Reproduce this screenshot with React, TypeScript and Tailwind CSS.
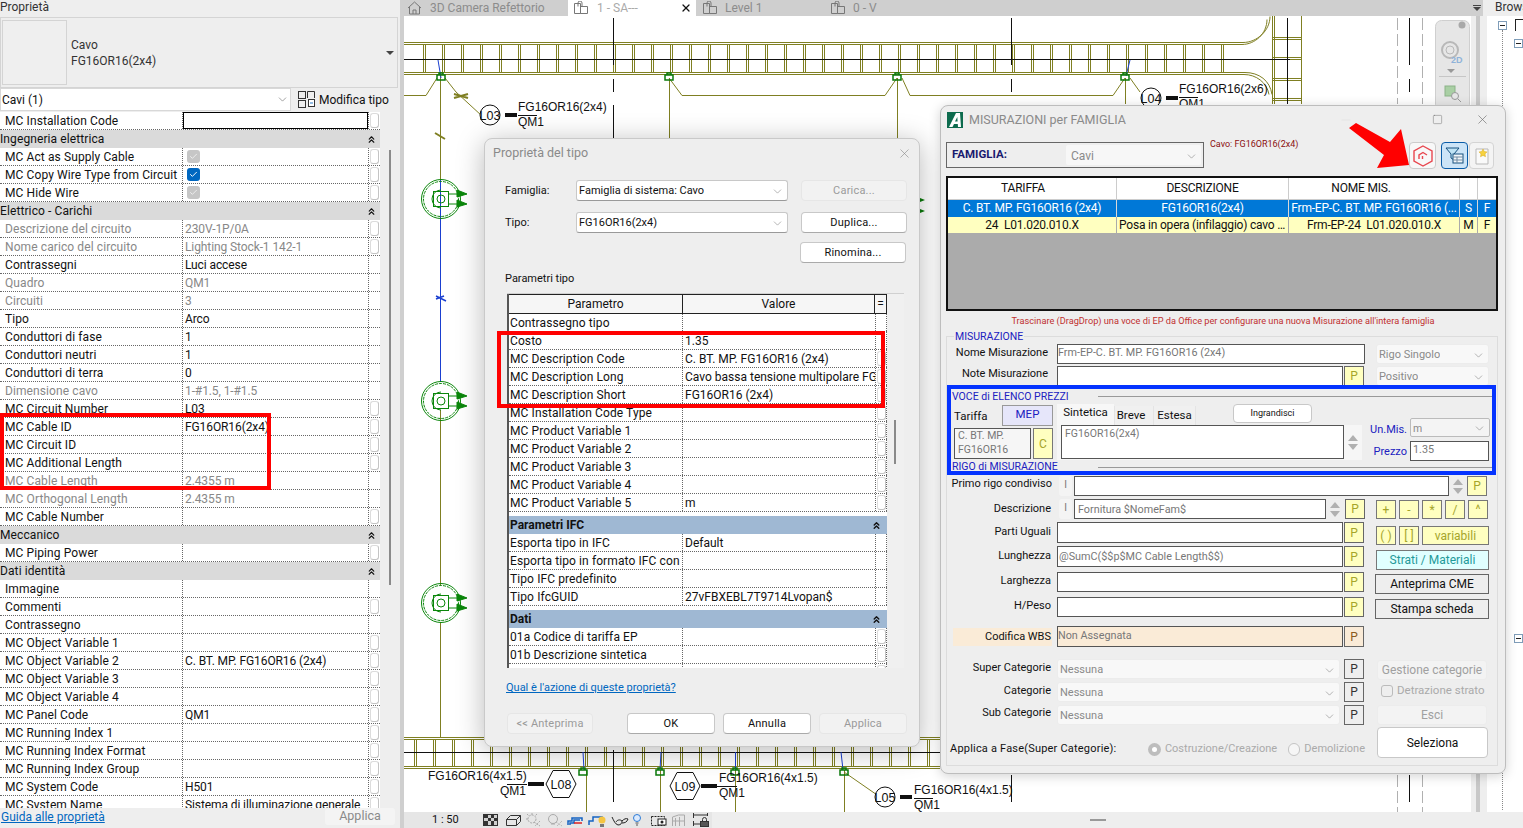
import { ChevronDown, ChevronsUp, X, Minus, Square, Check } from 'lucide-react';
import type { ReactNode } from 'react';

type Prop = { label: string; value?: string; muted?: boolean; pill?: boolean; check?: 'on' | 'off'; section?: boolean; focus?: boolean };

const props: Prop[] = [
  { label: 'MC Installation Code', pill: true, focus: true },
  { label: 'Ingegneria elettrica', section: true },
  { label: 'MC Act as Supply Cable', check: 'off', pill: true },
  { label: 'MC Copy Wire Type from Circuit', check: 'on', pill: true },
  { label: 'MC Hide Wire', check: 'off', pill: true },
  { label: 'Elettrico - Carichi', section: true },
  { label: 'Descrizione del circuito', value: '230V-1P/0A', muted: true, pill: true },
  { label: 'Nome carico del circuito', value: 'Lighting Stock-1 142-1', muted: true, pill: true },
  { label: 'Contrassegni', value: 'Luci accese' },
  { label: 'Quadro', value: 'QM1', muted: true },
  { label: 'Circuiti', value: '3', muted: true },
  { label: 'Tipo', value: 'Arco' },
  { label: 'Conduttori di fase', value: '1' },
  { label: 'Conduttori neutri', value: '1' },
  { label: 'Conduttori di terra', value: '0' },
  { label: 'Dimensione cavo', value: '1-#1.5, 1-#1.5', muted: true },
  { label: 'MC Circuit Number', value: 'L03', pill: true },
  { label: 'MC Cable ID', value: 'FG16OR16(2x4)', pill: true },
  { label: 'MC Circuit ID', pill: true },
  { label: 'MC Additional Length', pill: true },
  { label: 'MC Cable Length', value: '2.4355 m', muted: true },
  { label: 'MC Orthogonal Length', value: '2.4355 m', muted: true },
  { label: 'MC Cable Number', pill: true },
  { label: 'Meccanico', section: true },
  { label: 'MC Piping Power', pill: true },
  { label: 'Dati identità', section: true },
  { label: 'Immagine' },
  { label: 'Commenti', pill: true },
  { label: 'Contrassegno' },
  { label: 'MC Object Variable 1', pill: true },
  { label: 'MC Object Variable 2', value: 'C. BT. MP. FG16OR16 (2x4)', pill: true },
  { label: 'MC Object Variable 3', pill: true },
  { label: 'MC Object Variable 4', pill: true },
  { label: 'MC Panel Code', value: 'QM1', pill: true },
  { label: 'MC Running Index 1', pill: true },
  { label: 'MC Running Index Format', pill: true },
  { label: 'MC Running Index Group', pill: true },
  { label: 'MC System Code', value: 'H501', pill: true },
  { label: 'MC System Name', value: 'Sistema di illuminazione generale', pill: true },
];

const typeParams: Prop[] = [
  { label: 'Contrassegno tipo' },
  { label: 'Costo', value: '1.35' },
  { label: 'MC Description Code', value: 'C. BT. MP. FG16OR16 (2x4)', pill: true },
  { label: 'MC Description Long', value: 'Cavo bassa tensione multipolare FG', pill: true },
  { label: 'MC Description Short', value: 'FG16OR16 (2x4)', pill: true },
  { label: 'MC Installation Code Type', pill: true },
  { label: 'MC Product Variable 1', pill: true },
  { label: 'MC Product Variable 2', pill: true },
  { label: 'MC Product Variable 3', pill: true },
  { label: 'MC Product Variable 4', pill: true },
  { label: 'MC Product Variable 5', value: 'm', pill: true },
  { label: 'Parametri IFC', section: true },
  { label: 'Esporta tipo in IFC', value: 'Default' },
  { label: 'Esporta tipo in formato IFC con' },
  { label: 'Tipo IFC predefinito' },
  { label: 'Tipo IfcGUID', value: '27vFBXEBL7T9714Lvopan$' },
  { label: 'Dati', section: true },
  { label: '01a Codice di tariffa EP', pill: true },
  { label: '01b Descrizione sintetica', pill: true },
  { label: '', pill: true },
];

function Pill() {
  return <div className="mx-auto mt-[1px] h-[15px] w-[9px] rounded-[3px] border border-[#dcdcdc] border-r-[#c4c4c4] border-b-[#c4c4c4] bg-white" />;
}

function PropRow({ row }: { row: Prop }) {
  if (row.section) {
    return (
      <div className="flex h-[18px] items-center justify-between bg-[#dadada] pr-[3px] text-[12px] tracking-[0.1px] text-[#111]">
        <span>{row.label}</span>
        <ChevronsUp size={11} strokeWidth={2.5} />
      </div>
    );
  }
  const text = row.muted ? 'text-[#888]' : 'text-[#111]';
  return (
    <div className={`flex h-[18px] border-b border-dotted border-[#666] bg-white text-[12px] ${text}`}>
      <div className="w-[183px] shrink-0 truncate border-r border-dotted border-[#666] pl-[5px] leading-[18px] tracking-[0.1px]">{row.label}</div>
      <div className="w-[185px] shrink-0 overflow-hidden pl-[2px] leading-[18px] tracking-[-0.1px] whitespace-nowrap">
        {row.focus && <div className="ml-[-2px] h-[17px] w-[185px] border border-black" />}
        {row.check === 'on' && <div className="mt-[2px] ml-[2px] flex h-[13px] w-[13px] items-center justify-center rounded-[3px] bg-[#0067c0]"><Check size={9} strokeWidth={2.5} color="#fff" /></div>}
        {row.check === 'off' && <div className="mt-[2px] ml-[2px] flex h-[13px] w-[13px] items-center justify-center rounded-[3px] bg-[#c6c6c6]"><Check size={9} strokeWidth={2.5} color="#eee" /></div>}
        {row.value}
      </div>
      <div className="w-[12px] shrink-0 border-l border-dotted border-[#666]">{row.pill && <Pill />}</div>
    </div>
  );
}

function TypeRow({ row }: { row: Prop }) {
  if (row.section) {
    return (
      <div className="mt-[4px] flex h-[18px] w-[378px] items-center justify-between bg-[#9fb8d3] pr-[5px] pl-[1px] text-[12px] font-bold text-[#111]">
        <span>{row.label}</span>
        <ChevronsUp size={11} strokeWidth={3} />
      </div>
    );
  }
  return (
    <div className="flex h-[18px] w-[378px] border-b border-dotted border-[#666] bg-white text-[12px] text-[#111]">
      <div className="w-[174px] shrink-0 truncate border-r border-dotted border-[#666] pl-[1px] leading-[18px] tracking-[0.1px]">{row.label}</div>
      <div className="w-[192px] shrink-0 overflow-hidden pl-[2px] leading-[18px] whitespace-nowrap">{row.value}</div>
      <div className="w-[12px] shrink-0 border-x border-dotted border-[#666]">{row.pill && <Pill />}</div>
    </div>
  );
}

function Lock({ x }: { x: number }) {
  return (
    <svg width="16" height="14" viewBox="0 0 16 14" style={{ marginLeft: x }} className="shrink-0 text-[#777]" fill="none" stroke="currentColor">
      <path d="M1.500 2.500h6v10h-6zM7.500 5.500h7v7h-7z" />
      <path d="M5 5.500V2a2 2 0 0 1 4 0v3.500" />
    </svg>
  );
}

function House({ x }: { x: number }) {
  return (
    <svg width="15" height="14" viewBox="0 0 15 14" style={{ marginLeft: x }} className="shrink-0 text-[#777]" fill="none" stroke="currentColor">
      <path d="M1 7l6.500-6L14 7M2.500 6v7h10V6M6 13V9h3v4" />
    </svg>
  );
}

function Rungs({ y1, y2, from, to }: { y1: number; y2: number; from: number; to: number }) {
  const items: ReactNode[] = [];
  for (let x = from; x < to; x += 19) {
    items.push(<path key={x} d={`M${x}.5 ${y1}V${y2}M${x + 2}.5 ${y1}V${y2}`} />);
  }
  return <g stroke="#7f7f22" strokeWidth="1" fill="none">{items}</g>;
}

function Fixture({ y }: { y: number }) {
  return (
    <g stroke="#0a860a" fill="none" strokeWidth="1">
      <circle cx="441" cy={y} r="19.500" />
      <circle cx="441" cy={y} r="17.500" strokeDasharray="3 1" />
      <path d={`M432 ${y}a9 9 0 0 1 9-9M432 ${y}a9 9 0 0 0 9 9`} />
      <rect x="433.500" y={y - 7.5} width="15" height="15" />
      <circle cx="441" cy={y} r="4" />
      <path d={`M449 ${y - 5}h8M449 ${y + 5}h8`} />
      <path d={`M457 ${y - 9}l10 4-10 3zM457 ${y + 1}l10 4-10 3z`} fill="#0a860a" />
    </g>
  );
}

function Node({ x, y }: { x: number; y: number }) {
  return <path d={`M${x - 4} ${y}h8v5h-8zM${x - 2} ${y}v-2h4v2`} stroke="#0a7a0a" strokeWidth="1.500" fill="none" />;
}

function Label({ x, y, top, bottom, under, bx }: { x: number; y: number; top: string; bottom: string; under: [number, number]; bx?: number }) {
  return (
    <g fontFamily="'Liberation Sans', sans-serif" fontSize="12" fill="#111">
      <text x={x} y={y}>{top}</text>
      <line x1={under[0]} x2={under[1]} y1={y + 4.5} y2={y + 4.5} stroke="#111" />
      <text x={bx ?? x} y={y + 15}>{bottom}</text>
    </g>
  );
}

function Tag({ cx, cy, text, hex, left }: { cx: number; cy: number; text: string; hex?: boolean; left?: boolean }) {
  const r = hex ? 15 : 10;
  const thickX = left ? cx - r - 18 : cx + r + (hex ? 1 : 5);
  return (
    <g>
      <rect x={thickX} y={cy - 2} width={hex ? 16 : 12} height="4" fill="#111" />
      {hex ? (
        <path d={`M${cx - 15} ${cy}l7-13.500h16l7 13.500-7 13.500h-16z`} fill="#fff" stroke="#111" />
      ) : (
        <circle cx={cx} cy={cy} r="10" fill="#fff" stroke="#111" />
      )}
      <text x={cx} y={cy + 5} textAnchor="middle" fontFamily="'Liberation Sans', sans-serif" fontSize="12.500" fill="#111">{text}</text>
    </g>
  );
}

function Drawing() {
  return (
    <svg width="1067" height="796" viewBox="404 16 1067 796" className="block shrink-0 bg-white">
      <g stroke="#7f7f22" fill="none">
        <path d="M404 42.500H1243c14 0 27-12 27-26M404 44.500H1242c13 0 25-11 25-25" />
        <path d="M404 72.500H1245c14 0 25 8 27 22M404 74.500H1244c12 0 23 8 25 20" />
        <path d="M1272.500 16V104M1274.500 16V104M1301.500 16V104M1273 37.500h29M1273 39.500h29M1273 57.500h29M1273 59.500h29M1273 78.500h29M1273 80.500h29M1273 98.500h29M1273 100.500h29" />
        <path d="M404 95.500H426L437 78M445 78L456 92L482 116M669 78L682 95.500H885L897 78M902 78L910 95.500H1113L1125 78M1130 78L1140 92" />
        <path d="M440.500 75V180M669.500 78V140M897.500 78V140M1125.500 78V104M440.500 410V585M440.500 622V738" />
        <path d="M454 98l14-4M454 94l14 4M435 133l10 6" strokeWidth="2" />
        <path d="M586.500 770V812M660.500 770V812M735.500 770V812M844.500 770V812M844 772L880 797" />
        <path d="M404 737.500H940M404 739.500H940M404 766.500H940M404 768.500H940" />
      </g>
      <Rungs y1={45} y2={72} from={423} to={1240} />
      <Rungs y1={740} y2={766} from={414} to={940} />
      <path d="M404 59.500H1290M404 752.500H940M613.500 18V65M613.500 79V92M613.500 105V138M613.500 750V802M1011.500 18V65M1011.500 79V92M1011.500 775V802M1287.500 18V104M1409.500 18V65M1409.500 79V92M1409.500 775V802" stroke="#111" fill="none" />
      <g stroke="#b0b0b0" strokeDasharray="12 4" fill="none"><path d="M1397.500 18V104M1422.500 18V104M1397.500 775V812M1422.500 775V812" /></g>
      <path d="M440.500 180V382M438 60L441 78M583 752L584 770M661 752L660 770M735.500 752V770M841 752L843 770M1130 60L1126 76" stroke="#1a3fd0" fill="none" />
      <path d="M436 296l10 5M436 299l8-3" stroke="#1a3fd0" strokeWidth="1.500" fill="none" />
      <path d="M920 198l5 2-5 2zM920 209l5 2-5 2z" fill="#0a7a0a" />
      <Fixture y={199} />
      <Fixture y={401} />
      <Fixture y={603} />
      <Node x={441} y={75} />
      <Node x={669} y={75} />
      <Node x={897} y={75} />
      <Node x={1125} y={75} />
      <Node x={583} y={770} />
      <Node x={660} y={770} />
      <Node x={735} y={770} />
      <Node x={844} y={770} />
      <Label x={518} y={111} top="FG16OR16(2x4)" bottom="QM1" under={[518, 537]} />
      <Tag cx={490} cy={115} text="L03" />
      <Label x={1179} y={93} top="FG16OR16(2x6)" bottom="QM1" under={[1179, 1198]} />
      <Tag cx={1151} cy={98} text="L04" />
      <Label x={428} y={780} top="FG16OR16(4x1.5)" bottom="QM1" bx={500} under={[507, 527]} />
      <Tag cx={561} cy={784} text="L08" hex left />
      <Label x={719} y={782} top="FG16OR16(4x1.5)" bottom="QM1" under={[717, 737]} />
      <Tag cx={685} cy={786} text="L09" hex />
      <Label x={914} y={794} top="FG16OR16(4x1.5)" bottom="QM1" under={[914, 933]} />
      <Tag cx={885} cy={797} text="L05" />
      <g>
        <rect x="1435.500" y="20.500" width="34" height="90" rx="6" fill="#e6e6e6" stroke="#cfcfcf" />
        <circle cx="1462" cy="25" r="3.500" fill="#a9a9a9" />
        <circle cx="1450" cy="50" r="8" fill="none" stroke="#b8b8b8" strokeWidth="2" />
        <circle cx="1450" cy="50" r="4" fill="none" stroke="#b8b8b8" />
        <text x="1451" y="63" fontFamily="'Liberation Sans', sans-serif" fontSize="9" fontWeight="700" fill="#8fb3d9">2D</text>
        <path d="M1447 69h8l-4 4z" fill="#999" />
        <path d="M1439 76.500h27" stroke="#c6c6c6" />
        <rect x="1445" y="86" width="10" height="10" fill="#a9cfa4" stroke="#8bb287" />
        <circle cx="1455" cy="96" r="3.500" fill="#e6e6e6" stroke="#999" />
        <path d="M1458 99l3 3" stroke="#999" />
      </g>
    </svg>
  );
}

function StatusIcons() {
  return (
    <svg width="230" height="16" viewBox="0 0 230 16" className="ml-[32px] shrink-0" fill="none">
      <rect x="3.500" y="2.500" width="14" height="11" fill="#d0d0d0" stroke="#333" />
      <path d="M4 3h4v3H4zM11 3h3v3h-3zM8 6h3v3H8zM14 6h3v3h-3zM4 9h4v4H4zM11 9h3v4h-3z" fill="#333" />
      <path d="M26.500 7.500h10v6h-10zM26.500 7.500l4-4h10l-4 4M36.500 13.500l4-4v-6" stroke="#333" />
      <g stroke="#aaa" strokeDasharray="2 1"><circle cx="52" cy="7" r="4" /><path d="M52 1v2M46 7h2M47 2l2 2M57 2l-2 2" /><path d="M54 10l6 4M60 9l-5 5" /></g>
      <g stroke="#aaa"><circle cx="73" cy="7" r="4.500" /><path d="M71 12h4" /><path d="M76 10l6 4M82 9l-5 5" strokeDasharray="1 1" /></g>
      <path d="M88 13V9h4V6h10v3M90 13V11h4V8h6" stroke="#1463c2" strokeWidth="1.500" />
      <path d="M94 11h8" stroke="#d22" strokeWidth="1.500" />
      <path d="M109 13V9h4V5h9v3" stroke="#1463c2" strokeWidth="1.500" />
      <circle cx="122" cy="8" r="3.500" fill="#f5c542" />
      <rect x="120" y="12" width="4" height="3" fill="#777" />
      <path d="M132 5c2 4 3 7 6 8 3 0 4-2 4-4-2-2-5-1-6 1M142 9c2-2 4-3 6-2-1 3-3 4-6 4" stroke="#222" />
      <circle cx="157" cy="6" r="3.500" stroke="#2e7cd6" fill="#dbeafe" />
      <path d="M155.500 11h3M156 13h2" stroke="#555" />
      <rect x="171.500" y="4.500" width="13" height="9" stroke="#222" strokeDasharray="2 1" />
      <rect x="178" y="7" width="8" height="6" fill="#fff" stroke="#222" />
      <circle cx="182" cy="10" r="1.500" fill="#222" />
      <path d="M192.500 14V5l6-2h6v11M195.500 14V6M199.500 14V5M192 9h13" stroke="#aaa" />
      <path d="M213.500 1v5M227.500 1v3M213.500 3h14M213.500 9v5M214 12h6" stroke="#333" />
      <rect x="220.500" y="9.500" width="8" height="5" fill="#555" stroke="#333" />
      <path d="M222.500 9V7.500a2 2 0 0 1 4 0V9" stroke="#333" />
    </svg>
  );
}

function Win11Button({ className, children }: { className: string; children: ReactNode }) {
  return <div className={`flex items-center justify-center rounded-[4px] border pt-[2px] text-[11px] tracking-[0.2px] ${className}`}>{children}</div>;
}

function Select({ text, className, gray }: { text: string; className: string; gray?: boolean }) {
  return (
    <div className={`flex items-center justify-between pt-[2px] ${className}`}>
      <span className={`truncate pl-[2px] ${gray ? 'text-[#8a8a8a]' : 'text-[#111]'}`}>{text}</span>
      <ChevronDown size={13} strokeWidth={1} className="mr-[3px] shrink-0 text-[#777]" />
    </div>
  );
}

function TypeDialog() {
  return (
    <div className="absolute top-[138px] left-[484px] z-10 flex h-[609px] w-[436px] flex-col rounded-[8px] border border-[#c9c9c9] bg-[#eeeeee] shadow-[0_4px_28px_rgba(0,0,0,0.28)]">
      <div className="flex h-[29px] shrink-0 items-center justify-between pr-[7px] pl-[8px] text-[12.500px] text-[#8a8a8a]">
        <span>Proprietà del tipo</span>
        <X size={15} strokeWidth={1} className="text-[#888]" />
      </div>
      <div className="mt-[12px] flex h-[21px] items-center pl-[20px] text-[11px]">
        <span className="w-[71px] pt-[2px]">Famiglia:</span>
        <Select text="Famiglia di sistema: Cavo" className="h-[21px] w-[212px] rounded-[3px] border border-[#c8c8c8] border-b-[#999] bg-white" />
        <Win11Button className="ml-[13px] h-[21px] w-[106px] border-[#e6e6e6] bg-[#f2f2f2] text-[#9a9a9a]">Carica...</Win11Button>
      </div>
      <div className="mt-[11px] flex h-[21px] items-center pl-[20px] text-[11px]">
        <span className="w-[71px] pt-[2px]">Tipo:</span>
        <Select text="FG16OR16(2x4)" className="h-[21px] w-[212px] rounded-[3px] border border-[#c8c8c8] border-b-[#999] bg-white" />
        <Win11Button className="ml-[13px] h-[21px] w-[106px] border-[#c8c8c8] border-b-[#aaa] bg-white">Duplica...</Win11Button>
      </div>
      <div className="mt-[9px] flex h-[21px] items-center justify-end pr-[13px]">
        <Win11Button className="h-[21px] w-[106px] border-[#c8c8c8] border-b-[#aaa] bg-white">Rinomina...</Win11Button>
      </div>
      <div className="mt-[8px] h-[16px] pl-[20px] text-[11px] leading-[16px]">Parametri tipo</div>
      <div className="mt-[6px] ml-[22px] flex h-[375px] w-[397px] border-t border-[#d0d0d0] bg-[#f0f0f0]">
        <div className="w-[380px] shrink-0 overflow-hidden border-l-2 border-[#555] bg-white">
          <div className="flex h-[20px] w-[378px] border-t border-b border-[#222] bg-[#f6f6f6] text-[12px] leading-[19px] text-[#111]">
            <div className="w-[174px] shrink-0 border-r border-[#222] text-center">Parametro</div>
            <div className="w-[192px] shrink-0 border-r border-[#222] text-center">Valore</div>
            <div className="w-[12px] shrink-0 border-r border-[#222] text-center">=</div>
          </div>
          {typeParams.map((row, i) => <TypeRow key={i} row={row} />)}
        </div>
        <div className="w-[17px]"><div className="mt-[126px] ml-[7px] h-[44px] w-[2px] bg-[#8a8a8a]" /></div>
      </div>
      <div className="mt-[12px] h-[16px] pl-[21px] text-[11px] leading-[16px] text-[#0067c0] underline">Qual è l'azione di queste proprietà?</div>
      <div className="mt-[17px] flex h-[21px] pl-[22px]">
        <Win11Button className="h-[21px] w-[86px] border-[#e6e6e6] bg-[#f2f2f2] text-[#9a9a9a]">&lt;&lt; Anteprima</Win11Button>
        <Win11Button className="ml-[34px] h-[21px] w-[88px] border-[#c8c8c8] border-b-[#aaa] bg-white">OK</Win11Button>
        <Win11Button className="ml-[8px] h-[21px] w-[88px] border-[#c8c8c8] border-b-[#aaa] bg-white">Annulla</Win11Button>
        <Win11Button className="ml-[8px] h-[21px] w-[88px] border-[#e6e6e6] bg-[#f2f2f2] text-[#9a9a9a]">Applica</Win11Button>
      </div>
    </div>
  );
}

function P({ gray, wbs }: { gray?: boolean; wbs?: boolean }) {
  const tone = gray ? 'bg-[#eeeeee] text-[#333]' : wbs ? 'bg-[#faebd7] text-[#8a5a20]' : 'bg-[#ffffc0] text-[#a5a52a]';
  return <div className={`ml-[1px] flex h-full w-[20px] shrink-0 items-center justify-center border border-[#666] text-[12px] ${tone}`}>P</div>;
}

function Field({ className, text, tone = 'bg-white' }: { className: string; text?: string; tone?: string }) {
  return <div className={`h-full shrink-0 truncate border border-[#555] text-[10.800px] leading-[16px] text-[#777] ${tone} ${className}`}>{text}</div>;
}

function Spin() {
  return (
    <div className="flex w-[18px] shrink-0 flex-col items-center justify-center gap-[3px]">
      <div className="h-0 w-0 border-x-[5px] border-b-[6px] border-x-transparent border-b-[#b0b0b0]" />
      <div className="h-0 w-0 border-x-[5px] border-t-[6px] border-x-transparent border-t-[#b0b0b0]" />
    </div>
  );
}

function FormRow({ label, h, mt, children, lift = 'leading-[18px]' }: { label: string; h: string; mt: string; children: ReactNode; lift?: string }) {
  return (
    <div className={`flex ${h} ${mt}`}>
      <span className={`w-[105px] shrink-0 pr-[1px] text-right text-[11px] text-[#111] ${lift}`}>{label}</span>
      <div className="ml-[5px] flex h-full">{children}</div>
    </div>
  );
}

function Op({ className, children }: { className: string; children: ReactNode }) {
  return <div className={`flex h-[19px] items-center justify-center border border-[#777] bg-[#ffffc0] text-[12px] text-[#a5a52a] ${className}`}>{children}</div>;
}

function Gray({ className, children }: { className: string; children: ReactNode }) {
  return <div className={`flex items-center justify-center rounded-[3px] border border-[#ececec] bg-[#f3f3f3] text-[12px] text-[#a0a0a0] ${className}`}>{children}</div>;
}

const selectGray = 'h-full rounded-[3px] border border-[#ececec] bg-[#f8f8f8] text-[11px]';

function BigDialog() {
  return (
    <div className="absolute top-[105px] left-[940px] z-20 flex h-[669px] w-[566px] flex-col rounded-[8px] border border-[#bdbdbd] bg-[#eeeeee] shadow-[0_2px_12px_rgba(0,0,0,0.18)]">
      <div className="flex h-[27px] shrink-0 items-center pl-[6px]">
        <svg width="16" height="16" viewBox="0 0 16 16" className="shrink-0"><rect width="16" height="16" fill="#0d6b4e" /><path d="M2 15L9 1h4l1 14h-3l-.2-3H7l-1.500 3zM8 9.500h2.600L10.300 5z" fill="#fff" /></svg>
        <span className="ml-[6px] w-[370px] shrink-0 pt-[2px] text-[12.500px] whitespace-nowrap text-[#8a8a8a]">MISURAZIONI per FAMIGLIA</span>
        <Minus size={14} strokeWidth={1} className="shrink-0 text-[#ddd]" />
        <Square size={11} strokeWidth={1} className="ml-[79px] shrink-0 text-[#666]" />
        <X size={15} strokeWidth={1} className="ml-[32px] shrink-0 text-[#666]" />
      </div>
      <div className="mt-[9px] flex h-[26px] shrink-0 pl-[5px]">
        <div className="flex h-[26px] w-[258px] items-center border border-[#666] pl-[5px]">
          <span className="w-[114px] text-[11.500px] font-bold text-[#1a1a6e]">FAMIGLIA:</span>
          <Select text="Cavi" gray className="h-[20px] w-[135px] rounded-[2px] bg-[#f7f7f7] pl-[3px] text-[12px]" />
        </div>
        <div className="mt-[-5px] ml-[6px] text-[9px] leading-[14px] text-[#8b1010]">Cavo: FG16OR16(2x4)</div>
        <div className="ml-[111px] flex h-[27px] w-[27px] items-center justify-center rounded-[4px] border border-[#ccc] bg-[#f8f8f8]">
          <svg width="22" height="24" viewBox="0 0 22 24" fill="none" stroke="#e8474f" strokeWidth="1.400"><path d="M11 2l9 5v10l-9 5-9-5V7z" /><path d="M7 15v-4l4-2.500 4 2.500M10.500 15v-3" /></svg>
        </div>
        <div className="ml-[5px] flex h-[27px] w-[27px] items-center justify-center rounded-[4px] border border-[#0a5ca8] bg-[#cce4f7]">
          <svg width="20" height="20" viewBox="0 0 20 20"><path d="M1 2h13l-5 6v6l-3-2V8z" fill="#bfe3f5" stroke="#17507e" /><rect x="8" y="8" width="10" height="9" fill="#f2f6fa" stroke="#17507e" /><path d="M8 11h10M8 14h10M12 11v6" stroke="#6f8ba3" /></svg>
        </div>
        <div className="ml-[1px] flex h-[27px] w-[25px] items-center justify-center rounded-[4px] border border-[#d4d4d4] bg-[#f4f4f4]">
          <svg width="16" height="20" viewBox="0 0 16 20"><path d="M2 3h12v15H2z" fill="#fafafa" stroke="#b9b9b9" /><path d="M9 3l1.200 2.500 2.800.4-2 2 .5 2.800L9 9.400l-2.500 1.300.5-2.800-2-2 2.800-.4z" fill="#f6d23f" stroke="#d9a91f" strokeWidth=".5" /></svg>
        </div>
      </div>
      <div className="mt-[8px] ml-[5px] flex h-[135px] w-[552px] shrink-0 flex-col border-2 border-[#111] bg-[#ababab] text-center text-[12px] tracking-[-0.2px]">
        <div className="flex h-[22px] shrink-0 border-b border-[#ccc] bg-white leading-[21px] text-[#111]">
          <div className="w-[169px] border-r border-[#ccc] pr-[18px]">TARIFFA</div>
          <div className="w-[172px] border-r border-[#ccc]">DESCRIZIONE</div>
          <div className="w-[171px] border-r border-[#ccc] pr-[26px]">NOME MIS.</div>
          <div className="w-[18px] border-r border-[#ccc]" />
          <div className="w-[18px]" />
        </div>
        <div className="flex h-[17px] shrink-0 bg-[#0078d7] leading-[17px] text-white">
          <div className="w-[169px] border-r border-[#d8d8d8]">C. BT. MP. FG16OR16 (2x4)</div>
          <div className="w-[172px] border-r border-[#d8d8d8]">FG16OR16(2x4)</div>
          <div className="w-[171px] truncate border-r border-[#d8d8d8] px-[1px]">Frm-EP-C. BT. MP. FG16OR16 (...</div>
          <div className="w-[18px] border-r border-[#d8d8d8]">S</div>
          <div className="w-[18px]">F</div>
        </div>
        <div className="flex h-[16px] shrink-0 bg-[#ffffc0] leading-[16px] text-[#111]">
          <div className="w-[169px] border-r border-[#aaa]">24&nbsp; L01.020.010.X</div>
          <div className="w-[172px] truncate border-r border-[#aaa] px-[2px]">Posa in opera (infilaggio) cavo 2 ...</div>
          <div className="w-[171px] border-r border-[#aaa]">Frm-EP-24&nbsp; L01.020.010.X</div>
          <div className="w-[18px] border-r border-[#aaa]">M</div>
          <div className="w-[18px]">F</div>
        </div>
      </div>
      <div className="h-[20px] shrink-0 text-center text-[9.200px] leading-[20px] text-[#c03030]">Trascinare (DragDrop) una voce di EP da Office per configurare una nuova Misurazione all'intera famiglia</div>
      <div className="relative mt-[5px] ml-[5px] h-[430px] w-[552px] shrink-0 border border-[#dcdcdc]">
        <span className="absolute top-[-7px] left-[7px] bg-[#eeeeee] px-[1px] text-[10.500px] leading-[14px] text-[#2020c0]">MISURAZIONE</span>
        <div className="mt-[7px] flex h-[20px]">
          <span className="w-[101px] text-right text-[11px] leading-[18px]">Nome Misurazione</span>
          <Field className="ml-[9px] w-[308px]" text="Frm-EP-C. BT. MP. FG16OR16 (2x4)" />
          <Select text="Rigo Singolo" gray className={`ml-[11px] w-[113px] ${selectGray}`} />
        </div>
        <div className="mt-[2px] flex h-[20px]">
          <span className="w-[101px] text-right text-[11px] leading-[16px]">Note Misurazione</span>
          <Field className="ml-[9px] w-[286px]" />
          <P />
          <Select text="Positivo" gray className={`ml-[12px] w-[113px] ${selectGray}`} />
        </div>
        <div className="mt-[2px] flex h-[16px] items-center pl-[5px]">
          <span className="w-[141px] pt-[1px] text-[10.500px] leading-[16px] text-[#2020c0]">VOCE di ELENCO PREZZI</span>
          <div className="ml-[5px] h-px w-[398px] bg-[#999]" />
        </div>
        <div className="flex h-[56px]">
          <div className="ml-[7px] w-[99px] shrink-0">
            <div className="flex h-[22px] items-center">
              <span className="w-[48px] pt-[3px] text-[11.500px]">Tariffa</span>
              <div className="flex h-[21px] w-[51px] items-center justify-center border border-[#999] bg-[#e6e6fa] text-[11.500px] text-[#2020c0]">MEP</div>
            </div>
            <div className="mt-[2px] flex h-[31px]">
              <div className="w-[77px] border border-[#555] bg-[#f6f6f6] pl-[3px] text-[10.500px] leading-[14px] text-[#777]">C. BT. MP. FG16OR16</div>
              <div className="ml-[2px] flex w-[20px] items-center justify-center border border-[#777] bg-[#ffffc0] text-[12px] text-[#a5a52a]">C</div>
            </div>
          </div>
          <div className="ml-[4px] w-[305px] shrink-0">
            <div className="flex h-[21px] items-end text-[11.500px]">
              <div className="flex h-[21px] w-[57px] items-center justify-center bg-[#f7f7f7] pb-[3px]">Sintetica</div>
              <div className="flex h-[19px] w-[39px] items-center justify-center border-l border-[#e4e4e4] bg-[#f0f0f0] pr-[6px]">Breve</div>
              <div className="flex h-[19px] w-[43px] items-center justify-center border-x border-[#e4e4e4] bg-[#f0f0f0]">Estesa</div>
              <div className="mb-[2px] ml-[37px] flex h-[19px] w-[79px] items-center justify-center rounded-[4px] border border-[#c8c8c8] bg-white text-[9px]">Ingrandisci</div>
            </div>
            <div className="flex h-[35px] bg-[#f6f6f6] pl-[4px]">
              <div className="h-[34px] w-[284px] border border-[#555] bg-white pl-[3px] text-[10.500px] leading-[16px] text-[#777]">FG16OR16(2x4)</div>
              <Spin />
            </div>
          </div>
          <div className="ml-[7px] w-[121px] shrink-0 pt-[14px]">
            <div className="flex h-[19px] items-center">
              <span className="w-[38px] pt-[5px] text-right text-[11px] text-[#2020c0]">Un.Mis.</span>
              <Select text="m" gray className="ml-[3px] h-[19px] w-[80px] rounded-[2px] border border-[#bbb] bg-[#f4f4f4] text-[10.500px]" />
            </div>
            <div className="mt-[4px] flex h-[20px] items-center">
              <span className="w-[38px] pt-[2px] text-right text-[11px] text-[#2020c0]">Prezzo</span>
              <Field className="ml-[3px] w-[79px] pl-[2px]" text="1.35" />
            </div>
          </div>
        </div>
        <div className="flex h-[14px] items-center pl-[5px]">
          <span className="w-[141px] text-[10.500px] leading-[14px] text-[#2020c0]">RIGO di MISURAZIONE</span>
          <div className="ml-[5px] h-px w-[398px] bg-[#999]" />
        </div>
        <div className="mt-[2px] flex h-[20px]">
          <span className="w-[105px] shrink-0 text-right text-[11px] leading-[16px]">Primo rigo condiviso</span>
          <div className="ml-[7px] w-[13px] shrink-0 rounded-[3px] bg-[#f4f4f4] text-center text-[10px] leading-[18px] text-[#777]">I</div>
          <Field className="ml-[2px] w-[375px]" />
          <Spin />
          <div className="flex w-[20px] shrink-0 items-center justify-center border border-[#777] bg-[#ffffc0] text-[12px] text-[#a5a52a]">P</div>
        </div>
        <div className="mt-[3px] flex">
          <div className="w-[418px] shrink-0">
            <FormRow label="Descrizione" h="h-[20px]" mt="" lift="leading-[19px]">
              <div className="ml-[2px] w-[13px] rounded-[3px] bg-[#f4f4f4] text-center text-[10px] leading-[18px] text-[#777]">I</div>
              <Field className="ml-[2px] w-[252px] pt-[2px] pl-[3px]" text="Fornitura $NomeFam$" />
              <Spin />
              <P />
            </FormRow>
            <FormRow label="Parti Uguali" h="h-[21px]" mt="mt-[3px]" lift="leading-[20px]"><Field className="w-[286px]" /><P /></FormRow>
            <FormRow label="Lunghezza" h="h-[21px]" mt="mt-[3px]" lift="leading-[20px]"><Field className="w-[286px] pt-[2px] pl-[1px]" text="@SumC($$p$MC Cable Length$$)" /><P /></FormRow>
            <FormRow label="Larghezza" h="h-[20px]" mt="mt-[5px]"><Field className="w-[286px]" /><P /></FormRow>
            <FormRow label="H/Peso" h="h-[20px]" mt="mt-[5px]"><Field className="w-[286px]" /><P /></FormRow>
            <div className="mt-[9px] flex h-[21px]">
              <span className="mt-[2px] ml-[6px] h-[18px] w-[99px] bg-[#faebd7] pr-[1px] text-right text-[11px] leading-[18px]">Codifica WBS</span>
              <div className="ml-[5px] flex h-full"><Field className="w-[286px] pt-[1px]" tone="bg-[#faebd7]" text="Non Assegnata" /><P wbs /></div>
            </div>
            <FormRow label="Super Categorie" h="h-[20px]" mt="mt-[12px]"><Select text="Nessuna" gray className={`w-[283px] ${selectGray}`} /><div className="w-[3px]" /><P gray /></FormRow>
            <FormRow label="Categorie" h="h-[20px]" mt="mt-[3px]"><Select text="Nessuna" gray className={`w-[283px] ${selectGray}`} /><div className="w-[3px]" /><P gray /></FormRow>
            <FormRow label="Sub Categorie" h="h-[20px]" mt="mt-[3px]" lift="leading-[16px]"><Select text="Nessuna" gray className={`w-[283px] ${selectGray}`} /><div className="w-[3px]" /><P gray /></FormRow>
            <div className="mt-[14px] flex h-[20px] items-center pl-[3px] text-[11px]">
              <span className="w-[204px] tracking-[0.2px]">Applica a Fase(Super Categorie):</span>
              <div className="flex h-[13px] w-[13px] items-center justify-center rounded-full bg-[#bdbdbd]"><div className="h-[5px] w-[5px] rounded-full bg-white" /></div>
              <span className="ml-[4px] w-[117px] text-[#aaa]">Costruzione/Creazione</span>
              <div className="ml-[9px] h-[13px] w-[13px] rounded-full border border-[#c4c4c4] bg-[#f6f6f6]" />
              <span className="ml-[4px] text-[#aaa]">Demolizione</span>
            </div>
          </div>
          <div className="ml-[10px] w-[114px] shrink-0">
            <div className="mt-[1px] flex gap-[3px] pl-[1px]">
              <Op className="w-[20px]">+</Op>
              <Op className="w-[20px]">-</Op>
              <Op className="w-[20px]">*</Op>
              <Op className="w-[20px]">/</Op>
              <Op className="w-[20px]">^</Op>
            </div>
            <div className="mt-[7px] flex gap-[3px] pl-[1px]">
              <Op className="w-[20px]">( )</Op>
              <Op className="w-[20px]">[ ]</Op>
              <Op className="w-[67px]">variabili</Op>
            </div>
            <div className="mt-[5px] ml-[1px] flex h-[20px] w-[113px] items-center justify-center border border-[#777] bg-[#e0ffff] text-[12px] text-[#1f9a9a]">Strati / Materiali</div>
            <div className="mt-[4px] flex h-[20px] items-center justify-center border border-[#666] text-[12px]">Anteprima CME</div>
            <div className="mt-[5px] flex h-[20px] items-center justify-center border border-[#666] text-[12px]">Stampa scheda</div>
            <Gray className="mt-[41px] ml-[2px] h-[20px] w-[110px]">Gestione categorie</Gray>
            <div className="mt-[1px] ml-[6px] flex h-[19px] items-center gap-[4px] text-[11.500px] text-[#aaa]">
              <div className="h-[12px] w-[12px] rounded-[3px] border border-[#bbb]" />
              Detrazione strato
            </div>
            <Gray className="mt-[5px] ml-[2px] h-[20px] w-[110px]">Esci</Gray>
            <div className="mt-[2px] ml-[2px] flex h-[31px] w-[111px] items-center justify-center rounded-[4px] border border-[#c8c8c8] bg-white text-[12px]">Seleziona</div>
          </div>
        </div>
      </div>
    </div>
  );
}

export default function App() {
  return (
    <div className="relative flex h-[828px] w-[1523px] overflow-hidden bg-[#eeeeee] font-['Roboto',sans-serif] text-[#111]">
      <div className="flex w-[400px] shrink-0 flex-col">
        <div className="h-[16px] shrink-0 text-[12px] leading-[14px] text-[#333]">Proprietà</div>
        <div className="mt-[1px] flex h-[71px] w-[398px] shrink-0 items-center border border-[#d4d4d4] pr-[3px] pl-[1px]">
          <div className="h-[65px] w-[65px] border border-[#d4d4d4] bg-[#efefef]" />
          <div className="ml-[4px] flex-1 text-[12px] leading-[16px] text-[#333]">Cavo<br />FG16OR16(2x4)</div>
          <div className="h-0 w-0 border-x-[4px] border-t-[4px] border-x-transparent border-t-[#444]" />
        </div>
        <div className="flex h-[23px] shrink-0 items-center">
          <div className="flex h-[23px] w-[291px] items-center justify-between border border-[#d8d8d8] bg-white pl-[1px]">
            <span className="text-[12px]">Cavi (1)</span>
            <ChevronDown size={13} strokeWidth={1} className="mr-[1px] text-[#555]" />
          </div>
          <svg width="18" height="17" viewBox="0 0 18 17" fill="none" stroke="#333" className="ml-[7px]">
            <rect x="0.500" y="0.500" width="7" height="7" /><rect x="0.500" y="9.500" width="7" height="7" /><path d="M9.500 7V.5h7V7" /><rect x="10.500" y="8.500" width="6" height="7" fill="#fff" /><path d="M12 12h3" stroke="#2878c8" />
          </svg>
          <span className="ml-[3px] text-[12px]">Modifica tipo</span>
        </div>
        <div className="relative mt-[1px] flex-1 overflow-hidden">
          <div className="w-[380px]">
            {props.map((row) => <PropRow key={row.label} row={row} />)}
          </div>
          <div className="absolute top-[38px] left-[389px] h-[435px] w-[2px] bg-[#8a8a8a]" />
        </div>
        <div className="flex h-[20px] shrink-0 items-start justify-between pr-[5px] pl-[1px]">
          <span className="text-[12px] text-[#0067c0] underline">Guida alle proprietà</span>
          <div className="flex h-[17px] w-[70px] items-center justify-center rounded-[3px] bg-[#f4f4f4] text-[12.500px] text-[#8a8a8a]">Applica</div>
        </div>
      </div>

      <div className="flex w-[1087px] shrink-0 flex-col bg-[#eeeeee]">
        <div className="flex h-[16px] w-[1083px] shrink-0 items-center bg-[#cfcfcf] text-[12px] whitespace-nowrap text-[#8c8c8c]">
          <div className="flex w-[168px] shrink-0 items-center">
            <House x={7} />
            <span className="ml-[8px]">3D Camera Refettorio</span>
          </div>
          <div className="flex h-[16px] w-[128px] shrink-0 items-center bg-white">
            <Lock x={5} />
            <span className="ml-[8px] w-[83px] text-[#aaa]">1 - SA---</span>
            <X size={12} strokeWidth={2.500} className="text-[#111]" />
          </div>
          <div className="flex w-[134px] shrink-0 items-center">
            <Lock x={6} />
            <span className="ml-[7px]">Level 1</span>
          </div>
          <div className="flex shrink-0 items-center">
            <Lock x={0} />
            <span className="ml-[7px]">0 - V</span>
          </div>
          <div className="mr-[2px] ml-auto flex flex-col items-center gap-[1px]">
            <div className="h-[1px] w-[8px] bg-[#444]" />
            <div className="h-0 w-0 border-x-[4px] border-t-[4px] border-x-transparent border-t-[#444]" />
          </div>
        </div>
        <div className="flex h-[796px] shrink-0">
          <div className="w-[4px] shrink-0 bg-[#cfcfcf]" />
          <Drawing />
          <div className="ml-[5px] h-full w-[4px] shrink-0 bg-[#c8c8c8]" />
        </div>
        <div className="flex h-[16px] shrink-0 items-center">
          <div className="h-full w-[4px] shrink-0 bg-[#cfcfcf]" />
          <div className="flex h-[16px] w-[308px] shrink-0 items-center bg-[#e6e6e6] pl-[28px] text-[11px]">
            <span className="w-[16px] whitespace-nowrap">1 : 50</span>
            <StatusIcons />
          </div>
          <div className="ml-[378px] h-[2px] w-[16px] bg-[#999]" />
        </div>
      </div>

      <div className="flex flex-1 flex-col bg-white">
        <div className="h-[16px] shrink-0 overflow-hidden bg-[#eeeeee] pl-[8px] text-[12px] leading-[14px] whitespace-nowrap text-[#333]">Browser</div>
        <div className="relative flex-1 overflow-hidden">
          <div className="mt-[5px] ml-[11px] h-[9px] w-[9px] border border-[#7f9db9]"><div className="mt-[3px] ml-[1px] h-px w-[5px] bg-[#222]" /></div>
          <div className="absolute top-[3px] left-[28px] h-[12px] w-[12px] border-t border-l border-[#222]" />
          <div className="absolute top-[14px] left-[15px] h-[780px] border-l border-dotted border-[#888]" />
          <div className="mt-[9px] ml-[27px] h-[9px] w-[9px] border border-[#7f9db9]"><div className="mt-[3px] ml-[1px] h-px w-[5px] bg-[#222]" /></div>
          <div className="absolute top-[618px] left-[27px] h-[9px] w-[9px] border border-[#7f9db9]"><div className="mt-[3px] ml-[1px] h-px w-[5px] bg-[#222]" /></div>
        </div>
        <div className="h-[16px] shrink-0 bg-[#eeeeee]" />
      </div>

      <TypeDialog />
      <BigDialog />

      <div className="pointer-events-none absolute top-[413px] left-0 z-30 h-[77px] w-[271px] border-[4px] border-[#ff0000]" />
      <div className="pointer-events-none absolute top-[331px] left-[497px] z-30 h-[77px] w-[388px] border-[4px] border-[#ff0000]" />
      <div className="pointer-events-none absolute top-[385px] left-[947px] z-30 h-[90px] w-[549px] border-[4px] border-[#0433ff]" />
      <svg width="62" height="48" viewBox="1349 123 62 48" className="pointer-events-none absolute top-[123px] left-[1349px] z-30">
        <path d="M1349 128l7-5 34 19 11-13 8 36-32 3 7-13z" fill="#ff0000" />
      </svg>
    </div>
  );
}
